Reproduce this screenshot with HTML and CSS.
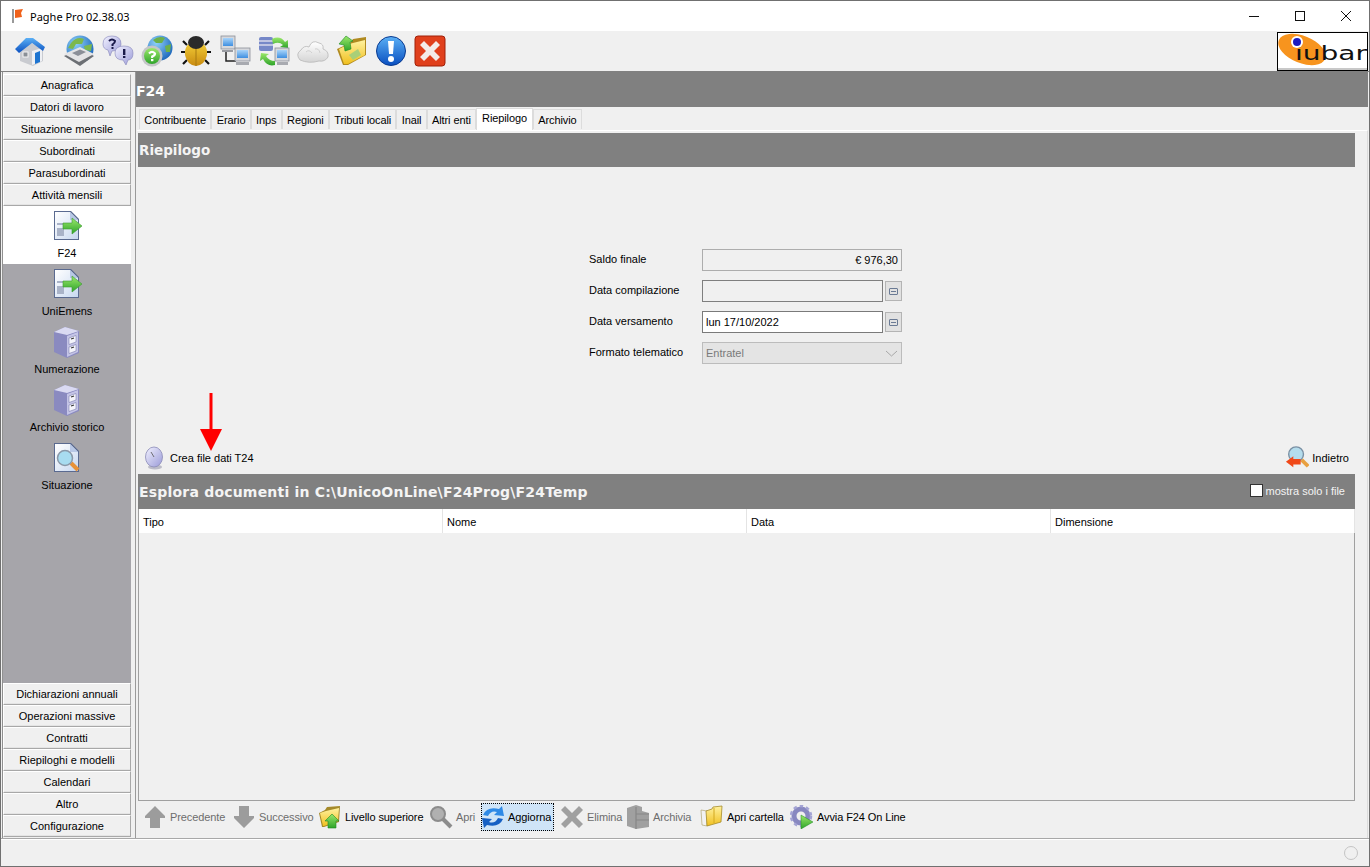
FILE: index.html
```html
<!DOCTYPE html>
<html lang="en">
<head>
    <meta charset="UTF-8">
    <title>Paghe Pro 02.38.03</title>
    <link rel="stylesheet" href="styles.css">
</head>
<body>
<svg class="defs" width="0" height="0">
    <defs>
        <linearGradient id="gBlue" x1="0" y1="0" x2="0" y2="1"><stop offset="0" stop-color="#5bb0f5"/><stop offset="1" stop-color="#0a4fc0"/></linearGradient>
        <linearGradient id="gYellow" x1="0" y1="0" x2="0" y2="1"><stop offset="0" stop-color="#fff2a0"/><stop offset="1" stop-color="#f0c020"/></linearGradient>
        <linearGradient id="gGreen" x1="0" y1="0" x2="0" y2="1"><stop offset="0" stop-color="#9be86a"/><stop offset="1" stop-color="#2ea42a"/></linearGradient>
        <linearGradient id="gLilac" x1="0" y1="0" x2="1" y2="1"><stop offset="0" stop-color="#f2f2ff"/><stop offset="1" stop-color="#9a9ad8"/></linearGradient>
        <linearGradient id="gPaper" x1="0" y1="0" x2="1" y2="1"><stop offset="0" stop-color="#ffffff"/><stop offset="1" stop-color="#c8d8f0"/></linearGradient>
        <linearGradient id="gScreen" x1="0" y1="0" x2="0" y2="1"><stop offset="0" stop-color="#a8d4fa"/><stop offset="1" stop-color="#3f8fe0"/></linearGradient>
        <linearGradient id="gBug" x1="0" y1="0" x2="0" y2="1"><stop offset="0" stop-color="#f6d23a"/><stop offset="1" stop-color="#c88a10"/></linearGradient>
        <linearGradient id="gCloud" x1="0" y1="0" x2="0" y2="1"><stop offset="0" stop-color="#ffffff"/><stop offset="1" stop-color="#d4d4d4"/></linearGradient>
        <radialGradient id="gGlobe" cx="0.35" cy="0.3" r="0.8"><stop offset="0" stop-color="#8ed0f8"/><stop offset="1" stop-color="#1560b8"/></radialGradient>

        <symbol id="i-home" viewBox="0 0 32 32">
            <path d="M6 14 L17 8 L29 14 V26 L19 31 L6 26Z" fill="#c9cbd0"/>
            <path d="M18 16 L28 13 V26 L18 30Z" fill="#eef0f4"/>
            <path d="M1 14 L12 3 L19 3 L31 12 L29 16 L18 8 L5 18Z" fill="url(#gBlue)"/>
            <rect x="9" y="17" width="5" height="5" fill="#8a8f96" stroke="#f4f4f4"/>
            <path d="M21 18 L26 16 V27 L21 29Z" fill="#1d74d0"/>
        </symbol>
        <symbol id="i-news" viewBox="0 0 32 32">
            <circle cx="17" cy="14" r="13.500" fill="url(#gGlobe)"/>
            <path d="M8 8 Q14 1 21 4 L19 9 L13 9 L10 14 L5 13Z M21 11 L29 9 L28 16 L22 15Z" fill="#7cb84e"/>
            <path d="M1 21 L17 14 L31 21 L17 31Z" fill="#6c6f74"/>
            <path d="M1 19 L17 12 L31 19 L16 27Z" fill="#e4e4e6"/>
            <path d="M9 18 L17 14.500 L23 17 L15 21Z" fill="#8b8f98"/>
        </symbol>
        <symbol id="i-bubbles" viewBox="0 0 32 32">
            <path d="M1 9 Q1 1 10 1 Q19 1 19 9 Q19 16 10 16 L8 21 L6 15 Q1 14 1 9Z" fill="url(#gLilac)" stroke="#8484b8" stroke-width=".6"/>
            <path d="M13 18 Q13 11 22 11 Q31 11 31 18 Q31 25 26 25 L24 30 L21 25 Q13 25 13 18Z" fill="url(#gLilac)" stroke="#8484b8" stroke-width=".6"/>
            <path d="M7 6 Q10 3 13 6 Q13 8 10.500 9.500 V11" fill="none" stroke="#1a1a4a" stroke-width="2"/>
            <rect x="9.500" y="12" width="2" height="2" fill="#1a1a4a"/>
            <rect x="21" y="14" width="2.400" height="6" fill="#1a1a4a"/><rect x="21" y="21" width="2.400" height="2" fill="#1a1a4a"/>
        </symbol>
        <symbol id="i-globehelp" viewBox="0 0 32 32">
            <circle cx="19" cy="13" r="12.500" fill="url(#gGlobe)"/>
            <path d="M12 5 Q18 0 24 3 L21 8 L15 8Z M24 11 L30 9 L29 17 L25 17Z" fill="#6cb04a"/>
            <circle cx="11" cy="21" r="10.500" fill="#c4c6c8"/>
            <circle cx="11" cy="21" r="8" fill="url(#gGreen)"/>
            <path d="M8 18.500 Q11 15.500 14 18.500 Q14 20.500 11.200 21.500 V23" fill="none" stroke="#fff" stroke-width="2.200"/>
            <rect x="10" y="24" width="2.400" height="2.200" fill="#fff"/>
        </symbol>
        <symbol id="i-bug" viewBox="0 0 32 32">
            <path d="M7 10 L3 6 M25 10 L29 6 M5 17 H1 M27 17 H31 M7 25 L3 29 M25 25 L29 29" stroke="#111" stroke-width="2.200" fill="none"/>
            <path d="M16 6 Q28 8 27 20 Q25 30 16 31 Q7 30 5 20 Q4 8 16 6Z" fill="url(#gBug)"/>
            <path d="M16 12 V31" stroke="#a87a10" stroke-width="1"/>
            <ellipse cx="16" cy="7.500" rx="8" ry="6.500" fill="#2a2a2a"/>
        </symbol>
        <symbol id="i-network" viewBox="0 0 32 32">
            <rect x="2" y="1" width="14" height="13" fill="#d6d8dc" stroke="#8c9098" stroke-width=".8"/>
            <rect x="4" y="3" width="10" height="8" fill="url(#gScreen)"/>
            <path d="M7 15 V26 H17" fill="none" stroke="#222" stroke-width="1.500"/>
            <rect x="3" y="15" width="11" height="2" fill="#9a9ca2"/>
            <rect x="16" y="13" width="15" height="13" fill="#d6d8dc" stroke="#8c9098" stroke-width=".8"/>
            <rect x="18" y="15" width="11" height="8" fill="url(#gScreen)"/>
            <rect x="17" y="27" width="13" height="3" fill="#a8aab0"/>
        </symbol>
        <symbol id="i-dbsync" viewBox="0 0 32 32">
            <rect x="1" y="2" width="14" height="14" rx="2" fill="#7688c8"/>
            <path d="M1 6 H15 M1 10 H15" stroke="#d8d8ea" stroke-width="1.400"/>
            <path d="M14 4 Q22 0 27 7 L30 5 L30 13 L22 12 L25 10 Q21 6 15 9Z" fill="url(#gGreen)"/>
            <rect x="17" y="13" width="14" height="13" fill="#d6d8dc" stroke="#8c9098" stroke-width=".8"/>
            <rect x="19" y="15" width="10" height="8" fill="url(#gScreen)"/>
            <rect x="19" y="27" width="11" height="3" fill="#a8aab0"/>
            <path d="M17 30 Q9 32 5 24 L2 26 L3 18 L11 19 L8 21 Q11 26 17 26Z" fill="url(#gGreen)"/>
        </symbol>
        <symbol id="i-cloud" viewBox="0 0 32 32">
            <path d="M3 25 Q-2 19 4 15 Q7 10 12 12 Q15 4 22 8 Q27 9 26 14 Q32 16 31 22 Q28 27 22 26 Q12 29 3 25Z" fill="url(#gCloud)" stroke="#b8b8b8" stroke-width=".8"/>
            <path d="M9 17 Q12 14 15 18 M18 14 Q22 13 23 18" fill="none" stroke="#d0d0d0"/>
        </symbol>
        <symbol id="i-folderup" viewBox="0 0 32 32">
            <path d="M1 14 L14 8 L17 4 L30 2 L30 20 L12 30 L7 30Z" fill="#b08a20"/>
            <path d="M3 14 L13 9 L29 5 L29 20 L12 29 L8 29Z" fill="url(#gYellow)"/>
            <path d="M13 20 L22 14 L25 20 L17 25Z" fill="#a8cf78"/>
            <path d="M3 9 L10 1 L17 6 L14 7 L15 14 L9 16 L8 10Z" fill="url(#gGreen)" stroke="#1c8a24" stroke-width=".6"/>
        </symbol>
        <symbol id="i-info" viewBox="0 0 32 32">
            <circle cx="16" cy="16" r="14.500" fill="url(#gBlue)" stroke="#0a3a90" stroke-width="1"/>
            <path d="M13 6 H19 L18 19 H14Z" fill="#fff"/>
            <circle cx="16" cy="24" r="3" fill="#fff"/>
        </symbol>
        <symbol id="i-close" viewBox="0 0 32 32">
            <rect x="1" y="1" width="30" height="30" rx="3" fill="#e0401c" stroke="#a02008"/>
            <path d="M6 10 L10 6 L16 12 L22 6 L26 10 L20 16 L26 22 L22 26 L16 20 L10 26 L6 22 L12 16Z" fill="#f4ece8"/>
        </symbol>
        <symbol id="i-docarrow" viewBox="0 0 32 32">
            <path d="M3 1 H20 L28 9 V30 H3Z" fill="#5a6a90"/>
            <path d="M4 2 H19 L27 10 V29 H4Z" fill="url(#gPaper)"/>
            <path d="M19 2 L27 10 H19Z" fill="#b8c8e6"/>
            <path d="M6 13 H13 V15 H6Z M6 18 H13 V26 H6Z" fill="#a9b3c8"/>
            <path d="M12 13 H21 V8 L31 16 L21 24 V19 H12Z" fill="url(#gGreen)" stroke="#3c9a30" stroke-width=".6"/>
        </symbol>
        <symbol id="i-cabinet" viewBox="0 0 32 32">
            <path d="M3 6 L14 1 L28 5 L28 27 L16 32 L3 26Z" fill="#8a8ac0"/>
            <path d="M3 6 L14 1 L28 5 L16 9Z" fill="#dadaf2"/>
            <path d="M16 10 L27 6 V26 L16 31Z" fill="#c4c4e6"/>
            <path d="M18 12 L25 9.500 V16 L18 18.500Z M18 21 L25 18.500 V25 L18 27.500Z" fill="#f4f4fb" stroke="#6c6ca0" stroke-width=".5"/>
            <path d="M20 13 L23 12 M20 22 L23 21" stroke="#333" stroke-width="1.300"/>
        </symbol>
        <symbol id="i-docsearch" viewBox="0 0 32 32">
            <path d="M3 1 H20 L28 9 V30 H3Z" fill="#5a6a90"/>
            <path d="M4 2 H19 L27 10 V29 H4Z" fill="url(#gPaper)"/>
            <path d="M19 2 L27 10 H19Z" fill="#b8c8e6"/>
            <path d="M20 21 L27 28" stroke="#e89238" stroke-width="4"/>
            <circle cx="14" cy="16" r="7.500" fill="#a8dcf0" stroke="#8a98a8" stroke-width="1.500"/>
        </symbol>
        <symbol id="i-dish" viewBox="0 0 24 24">
            <ellipse cx="12" cy="21" rx="7" ry="2.500" fill="#bcbcc8"/>
            <ellipse cx="11" cy="11" rx="8.500" ry="10" fill="url(#gLilac)" stroke="#8a8ab8" stroke-width=".8"/>
            <path d="M11 11 L8 6" stroke="#555" stroke-width=".8"/>
        </symbol>
        <symbol id="i-searchback" viewBox="0 0 26 26">
            <circle cx="12" cy="9" r="8" fill="#b4dcec" stroke="#7a90a4" stroke-width="1.500"/>
            <path d="M18 15 L25 22" stroke="#e8a040" stroke-width="4"/>
            <path d="M1 17 L9 11 V14 H17 V20 H9 V23Z" fill="#f04818"/>
        </symbol>
        <symbol id="i-up" viewBox="0 0 22 24"><path d="M11 1 L21 11 V13 H16 V23 H6 V13 H1 V11Z" fill="#9c9c9c"/></symbol>
        <symbol id="i-down" viewBox="0 0 22 24"><path d="M6 1 H16 V11 H21 V13 L11 23 L1 13 V11 H6Z" fill="#9c9c9c"/></symbol>
        <symbol id="i-folderup-s" viewBox="0 0 24 24">
            <path d="M1 8 L7 5 L9 2 L22 1 L21 17 L6 22 L4 22Z" fill="#a58a2a"/>
            <path d="M2 8 L8 6 L21 3 L20 16 L6 21 L5 21Z" fill="url(#gYellow)"/>
            <path d="M14 9 L21 16 H18 V23 H10 V16 H7Z" fill="url(#gGreen)" stroke="#1c8a24" stroke-width=".6"/>
        </symbol>
        <symbol id="i-mag" viewBox="0 0 24 24">
            <circle cx="9" cy="9" r="7" fill="#b0b0b0" stroke="#8c8c8c" stroke-width="2"/>
            <path d="M14 14 L22 22" stroke="#8c8c8c" stroke-width="4"/>
        </symbol>
        <symbol id="i-refresh" viewBox="0 0 24 24">
            <path d="M2 10 Q6 1 18 4 L21 1 L23 11 L13 10 L16 7 Q10 5 7 11Z" fill="#2f8ae6"/>
            <path d="M22 14 Q18 23 6 20 L3 23 L1 13 L11 14 L8 17 Q14 19 17 13Z" fill="#1660c4"/>
        </symbol>
        <symbol id="i-x" viewBox="0 0 24 24"><path d="M1 5 L5 1 L12 8 L19 1 L23 5 L16 12 L23 19 L19 23 L12 16 L5 23 L1 19 L8 12Z" fill="#a0a0a0"/></symbol>
        <symbol id="i-archive" viewBox="0 0 24 24">
            <path d="M1 3 L10 0 L16 2 V6 L23 8 V22 L10 24 L1 21Z" fill="#a0a0a0"/>
            <path d="M10 9 H23 M10 15 H23 M10 2 V24" stroke="#868686" stroke-width="1.200"/>
        </symbol>
        <symbol id="i-folder" viewBox="0 0 24 24">
            <path d="M1 5 L7 6 V21 L2 20Z" fill="#f2f2f2" stroke="#a89a60" stroke-width=".6"/>
            <path d="M6 6 L12 4 L13 2 L22 1 L21 17 L7 21Z" fill="url(#gYellow)" stroke="#a58a2a" stroke-width=".8"/>
            <path d="M14 3 V18" stroke="#d2a820"/>
        </symbol>
        <symbol id="i-gear" viewBox="0 0 24 24">
            <circle cx="11" cy="11" r="7" fill="none" stroke="#8888c0" stroke-width="5"/>
            <circle cx="11" cy="11" r="10" fill="none" stroke="#a4a4d4" stroke-width="2.500" stroke-dasharray="3.500 3"/>
            <path d="M11 10 L23 17 L11 24Z" fill="url(#gGreen)" stroke="#1c8a24" stroke-width=".5"/>
        </symbol>
    </defs>
</svg>

<div class="window">
    <div class="titlebar">
        <svg class="app-flag" width="16" height="16" viewBox="0 0 16 16"><path d="M3 1 V15" stroke="#999" stroke-width="2"/><path d="M5 2 L13 1 L11 5 L12 9 L5 10Z" fill="#f0611a"/></svg>
        <span class="app-title">Paghe Pro 02.38.03</span>
        <div class="win-buttons">
            <svg width="46" height="30" viewBox="0 0 46 30"><path d="M18 15.500 H28" stroke="#111"/></svg>
            <svg width="46" height="30" viewBox="0 0 46 30"><rect x="18.500" y="10.500" width="9" height="9" fill="none" stroke="#111"/></svg>
            <svg width="46" height="30" viewBox="0 0 46 30"><path d="M18 10 L28 20 M28 10 L18 20" stroke="#111"/></svg>
        </div>
    </div>

    <div class="toolbar">
        <svg class="tool-icon home-icon"><use href="#i-home"/></svg>
        <svg class="tool-icon"><use href="#i-news"/></svg>
        <svg class="tool-icon"><use href="#i-bubbles"/></svg>
        <svg class="tool-icon"><use href="#i-globehelp"/></svg>
        <svg class="tool-icon"><use href="#i-bug"/></svg>
        <svg class="tool-icon"><use href="#i-network"/></svg>
        <svg class="tool-icon"><use href="#i-dbsync"/></svg>
        <svg class="tool-icon"><use href="#i-cloud"/></svg>
        <svg class="tool-icon"><use href="#i-folderup"/></svg>
        <svg class="tool-icon"><use href="#i-info"/></svg>
        <svg class="tool-icon"><use href="#i-close"/></svg>
        <div class="logo">
            <span class="logo-blob"></span>
            <span class="logo-text">iubar</span>
            <span class="logo-dot"></span>
        </div>
    </div>

    <div class="workspace">
        <div class="sidebar">
            <div class="menu-btn">Anagrafica</div>
            <div class="menu-btn">Datori di lavoro</div>
            <div class="menu-btn">Situazione mensile</div>
            <div class="menu-btn">Subordinati</div>
            <div class="menu-btn">Parasubordinati</div>
            <div class="menu-btn">Attività mensili</div>
            <div class="menu-panel">
                <div class="menu-item active"><svg class="menu-icon"><use href="#i-docarrow"/></svg><span>F24</span></div>
                <div class="menu-item"><svg class="menu-icon"><use href="#i-docarrow"/></svg><span>UniEmens</span></div>
                <div class="menu-item"><svg class="menu-icon"><use href="#i-cabinet"/></svg><span>Numerazione</span></div>
                <div class="menu-item"><svg class="menu-icon"><use href="#i-cabinet"/></svg><span>Archivio storico</span></div>
                <div class="menu-item"><svg class="menu-icon"><use href="#i-docsearch"/></svg><span>Situazione</span></div>
            </div>
            <div class="menu-btn">Dichiarazioni annuali</div>
            <div class="menu-btn">Operazioni massive</div>
            <div class="menu-btn">Contratti</div>
            <div class="menu-btn">Riepiloghi e modelli</div>
            <div class="menu-btn">Calendari</div>
            <div class="menu-btn">Altro</div>
            <div class="menu-btn">Configurazione</div>
        </div>

        <div class="main">
            <div class="page-title">F24</div>
            <div class="tabs">
                <div class="tab">Contribuente</div>
                <div class="tab">Erario</div>
                <div class="tab">Inps</div>
                <div class="tab">Regioni</div>
                <div class="tab">Tributi locali</div>
                <div class="tab">Inail</div>
                <div class="tab">Altri enti</div>
                <div class="tab selected">Riepilogo</div>
                <div class="tab">Archivio</div>
            </div>
            <div class="tab-body">
                <div class="section-head recap-head">Riepilogo</div>
                <div class="form">
                    <div class="form-row">
                        <label>Saldo finale</label>
                        <div class="field readonly amount">€ 976,30</div>
                    </div>
                    <div class="form-row">
                        <label>Data compilazione</label>
                        <div class="field short disabled"></div>
                        <div class="mini-btn"><span></span></div>
                    </div>
                    <div class="form-row">
                        <label>Data versamento</label>
                        <div class="field short">lun 17/10/2022</div>
                        <div class="mini-btn"><span></span></div>
                    </div>
                    <div class="form-row">
                        <label>Formato telematico</label>
                        <div class="field combo">
                            <span class="combo-value">Entratel</span>
                            <svg width="19" height="20" viewBox="0 0 19 20"><path d="M4 8 L9.500 13 L15 8" fill="none" stroke="#a8a8a8"/></svg>
                        </div>
                    </div>
                </div>
                <div class="actions">
                    <div class="action"><svg class="action-icon"><use href="#i-dish"/></svg>Crea file dati T24</div>
                    <div class="action"><svg class="action-icon"><use href="#i-searchback"/></svg>Indietro</div>
                </div>
                <div class="section-head explorer-head">
                    <span>Esplora documenti in C:\UnicoOnLine\F24Prog\F24Temp</span>
                    <span class="only-files"><i class="check"></i>mostra solo i file</span>
                </div>
                <div class="file-table">
                    <div class="file-head">
                        <div>Tipo</div>
                        <div>Nome</div>
                        <div>Data</div>
                        <div>Dimensione</div>
                    </div>
                </div>
                <div class="bottom-bar">
                    <div class="bar-item off"><svg class="bar-icon"><use href="#i-up"/></svg>Precedente</div>
                    <div class="bar-item off"><svg class="bar-icon"><use href="#i-down"/></svg>Successivo</div>
                    <div class="bar-item"><svg class="bar-icon"><use href="#i-folderup-s"/></svg>Livello superiore</div>
                    <div class="bar-item off"><svg class="bar-icon"><use href="#i-mag"/></svg>Apri</div>
                    <div class="bar-item focused"><svg class="bar-icon"><use href="#i-refresh"/></svg>Aggiorna</div>
                    <div class="bar-item off"><svg class="bar-icon"><use href="#i-x"/></svg>Elimina</div>
                    <div class="bar-item off"><svg class="bar-icon"><use href="#i-archive"/></svg>Archivia</div>
                    <div class="bar-item"><svg class="bar-icon"><use href="#i-folder"/></svg>Apri cartella</div>
                    <div class="bar-item"><svg class="bar-icon"><use href="#i-gear"/></svg>Avvia F24 On Line</div>
                </div>
            </div>
        </div>
    </div>

    <div class="statusbar"><span class="spinner"></span></div>

    <svg class="red-arrow" width="26" height="60" viewBox="0 0 26 60"><path d="M11.500 0 H14.500 V36 H24 L13 58 L2 36 H11.500Z" fill="#f00"/></svg>
</div>
</body>
</html>
```
FILE: styles.css
```css
* {
    box-sizing: border-box;
}
html, body {
    margin: 0;
    height: 100%;
    overflow: hidden;
}
body {
    font-family: "Liberation Sans", Tahoma, sans-serif;
    font-size: 11px;
    color: #000;
    background-color: #f0f0f0;
}
.defs {
    position: absolute;
}
.window {
    position: relative;
    width: 1370px;
    height: 867px;
    display: flex;
    flex-direction: column;
    border: 1px solid #707070;
    background-color: #f0f0f0;
}

/* title bar */
.titlebar {
    height: 30px;
    display: flex;
    align-items: center;
    padding-left: 9px;
    background-color: #fff;
}
.app-flag {
    margin-right: 4px;
}
.app-title {
    font-family: "Noto Sans", sans-serif;
    font-size: 11px;
}
.win-buttons {
    margin-left: auto;
    display: flex;
}

/* icon toolbar */
.toolbar {
    height: 41px;
    display: flex;
    align-items: center;
    gap: 7px;
    padding-left: 13px;
    border-bottom: 1px solid #808080;
}
.tool-icon {
    width: 32px;
    height: 32px;
}
.home-icon {
    margin-right: 10px;
}
.logo {
    position: relative;
    width: 91px;
    height: 39px;
    margin-left: auto;
    margin-right: 1px;
    overflow: hidden;
    background-color: #fff;
    border: 1px solid #000;
    box-shadow: inset 0 -2px 0 #c8c8c8;
}
.logo-blob {
    position: absolute;
    left: -1px;
    top: 3px;
    width: 50px;
    height: 27px;
    border-radius: 50%;
    background-color: #f7941e;
    transform: rotate(22deg);
}
.logo-dot {
    position: absolute;
    left: 15px;
    top: 5px;
    width: 8px;
    height: 8px;
    border-radius: 50%;
    background-color: #1a1ac0;
    box-shadow: 0 0 0 2px #fff;
}
.logo-text {
    position: absolute;
    left: 17px;
    top: 6px;
    font-family: "DejaVu Sans", sans-serif;
    font-size: 20px;
    line-height: 28px;
    color: #111;
    transform: scaleX(1.4);
    transform-origin: left center;
}

/* workspace */
.workspace {
    flex: 1;
    display: flex;
    min-height: 0;
}
.sidebar {
    width: 129px;
    margin-left: 1px;
    display: flex;
    flex-direction: column;
    padding: 2px 0 1px;
    border-left: 1px solid #909090;
}
.menu-btn {
    height: 22px;
    flex-shrink: 0;
    display: flex;
    align-items: center;
    justify-content: center;
    background-color: #f0f0f0;
    border: 1px solid #fff;
    border-right-color: #a8a8a8;
    border-bottom-color: #a8a8a8;
    box-shadow: inset 0 -1px 0 #e4e4e4;
}
.menu-panel {
    flex: 1;
    background-color: #a6a5aa;
}
.menu-item {
    height: 58px;
    display: flex;
    flex-direction: column;
    align-items: center;
    padding-top: 4px;
}
.menu-item span {
    margin-top: 5px;
}
.menu-item.active {
    background-color: #fff;
}
.menu-icon {
    width: 32px;
    height: 32px;
}

/* main area */
.main {
    flex: 1;
    margin-left: 4px;
    min-width: 0;
    display: flex;
    flex-direction: column;
    padding-right: 1px;
    border-left: 1px solid #9a9a9a;
}
.page-title {
    height: 35px;
    display: flex;
    align-items: center;
    padding-top: 2px;
    color: #fff;
    font-family: "DejaVu Sans", sans-serif;
    font-weight: bold;
    font-size: 14px;
    background-color: #808080;
}
.tabs {
    display: flex;
    height: 23px;
    padding: 1px 0 0 3px;
    position: relative;
    z-index: 1;
}
.tab {
    height: 20px;
    margin-top: 1px;
    padding: 0 4.300px;
    display: flex;
    align-items: center;
    letter-spacing: -.1px;
    border: 1px solid #dcdcdc;
    border-bottom: none;
}
.tab.selected {
    height: 22px;
    margin-top: 0;
    padding: 0 5px 3px;
    background-color: #fff;
}
.tab-body {
    flex: 1;
    min-height: 0;
    display: flex;
    flex-direction: column;
    margin-left: 1px;
    padding: 2px 12px 0 1px;
    border-top: 1px solid #fff;
    border-right: 1px solid #dcdcdc;
}
.section-head {
    height: 34px;
    display: flex;
    align-items: center;
    padding-left: 1px;
    flex-shrink: 0;
    color: #f4f4f4;
    font-family: "DejaVu Sans", sans-serif;
    font-weight: bold;
    font-size: 14px;
    background-color: #808080;
}
.recap-head {
    font-size: 13.500px;
}

/* form */
.form {
    height: 274px;
    padding-top: 82px;
    margin-left: 451px;
    flex-shrink: 0;
}
.form-row {
    display: flex;
    align-items: center;
    height: 22px;
    margin-bottom: 9px;
}
.form-row label {
    width: 113px;
    padding-bottom: 2px;
}
.field {
    width: 200px;
    height: 22px;
    display: flex;
    align-items: center;
    padding: 0 3px 1px;
    background-color: #fff;
    border: 1px solid #7a7a7a;
}
.field.short {
    width: 181px;
}
.readonly {
    justify-content: flex-end;
    background-color: #f0f0f0;
    border: 1px solid #adadad;
}
.disabled {
    background-color: #f0f0f0;
    border: 1px solid #7f7f7f;
}
.combo {
    padding: 1px 0 1px 2px;
    color: #7a7a7a;
    background-color: #e4e4e4;
    border: 1px solid #bcbcbc;
}
.combo-value {
    flex: 1;
    padding-left: 1px;
}
.mini-btn {
    width: 17px;
    height: 20px;
    margin-left: 2px;
    display: flex;
    align-items: center;
    justify-content: center;
    background-color: #e1e1e1;
    border: 1px solid #b4b4b4;
}
.mini-btn span {
    width: 9px;
    height: 7px;
    border: 1px solid #6a7a94;
    border-radius: 1px;
    background: linear-gradient(#6a7a94, #6a7a94) center / 5px 1px no-repeat;
}

/* actions above the explorer */
.actions {
    height: 33px;
    display: flex;
    align-items: center;
    justify-content: space-between;
    padding: 0 6px 0 5px;
    flex-shrink: 0;
}
.action {
    display: flex;
    align-items: center;
}
.action-icon {
    width: 24px;
    height: 24px;
    margin-right: 3px;
}
.explorer-head {
    height: 35px;
    justify-content: space-between;
    padding: 1px 10px 0 1px;
    letter-spacing: .2px;
}
.only-files {
    display: flex;
    align-items: center;
    font-family: "Liberation Sans", sans-serif;
    font-weight: normal;
    font-size: 11px;
    letter-spacing: 0;
    margin-bottom: 3px;
}
.check {
    width: 13px;
    height: 13px;
    margin-right: 3px;
    background-color: #fff;
    border: 1px solid #333;
}

/* file list */
.file-table {
    height: 292px;
    flex-shrink: 0;
    border: 1px solid #a0a0a0;
    border-top: none;
}
.file-head {
    display: grid;
    grid-template-columns: repeat(4, 304px) 1fr;
    height: 24px;
    background-color: #fff;
}
.file-head div {
    display: flex;
    align-items: center;
    padding: 2px 0 0 4px;
    border-right: 1px solid #e4e4e4;
}

/* bottom toolbar */
.bottom-bar {
    flex: 1;
    display: grid;
    grid-template-columns: 89px 86px 111px 52px 79px 66px 74px 90px 1fr;
    align-items: start;
    padding: 2px 0 0 5px;
}
.bar-item {
    height: 28px;
    display: flex;
    align-items: center;
    letter-spacing: -.1px;
    white-space: nowrap;
}
.bar-icon {
    width: 24px;
    height: 24px;
    margin-right: 3px;
    flex-shrink: 0;
}
.bar-item.off {
    color: #6d6d6d;
}
.focused {
    width: 73px;
    background-color: #cfe4f7;
    outline: 1px dotted #000;
    outline-offset: -1px;
}

/* status bar */
.statusbar {
    height: 28px;
    display: flex;
    align-items: center;
    justify-content: flex-end;
    padding-right: 11px;
    border-top: 1px solid #a8a8a8;
    box-shadow: inset 0 1px 0 #fff;
}
.spinner {
    width: 14px;
    height: 14px;
    border: 1px solid #c4c4c4;
    border-radius: 50%;
}

/* annotation drawn on top of the screenshot */
.red-arrow {
    position: absolute;
    left: 197px;
    top: 392px;
}
```
